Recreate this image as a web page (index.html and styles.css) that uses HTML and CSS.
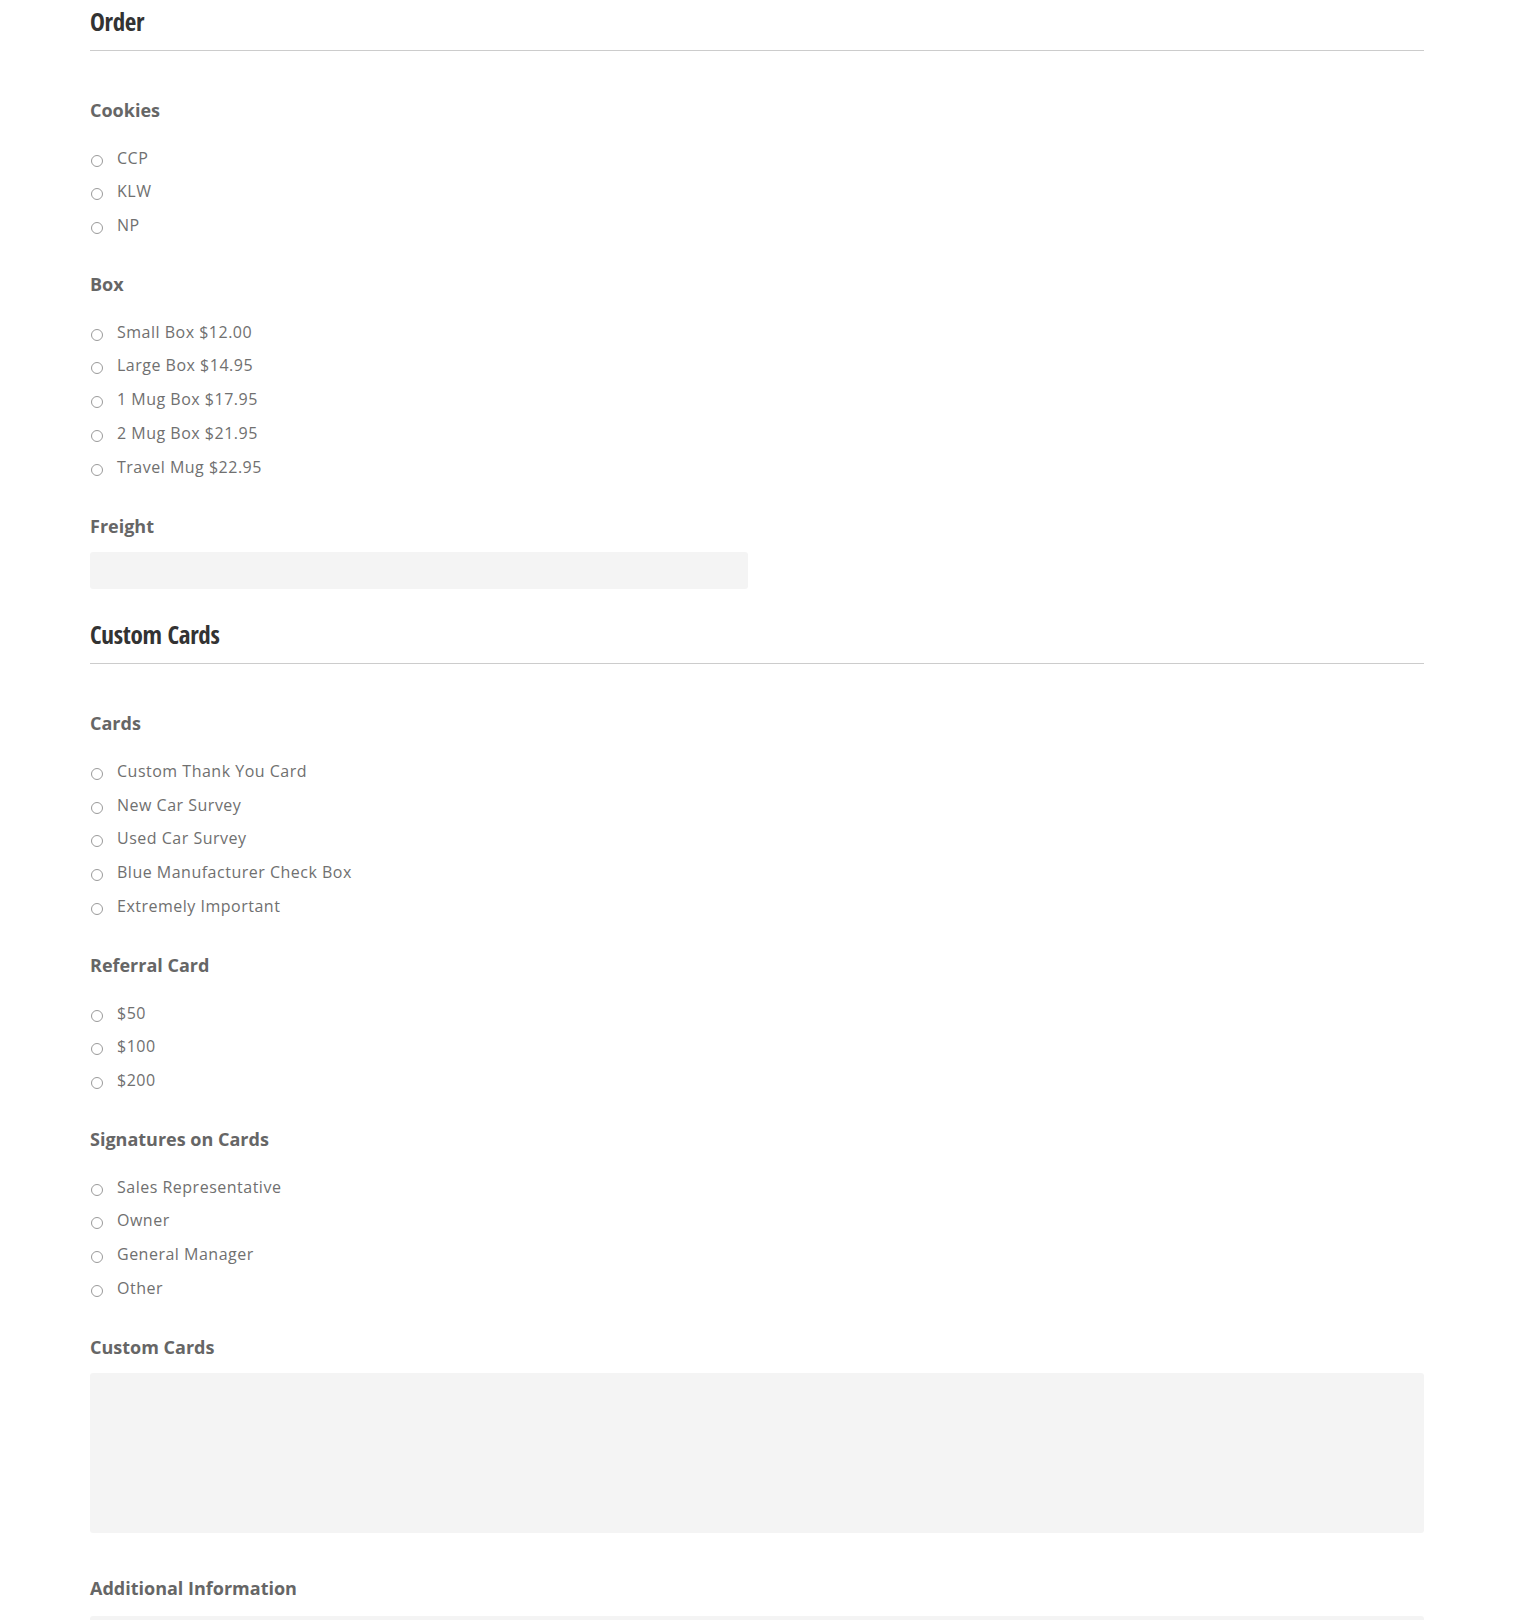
FILE: index.html
```html
<!DOCTYPE html>
<html lang="en">
<head>
<meta charset="utf-8">
<title>Order</title>
<link rel="stylesheet" href="styles.css">
</head>
<body>
<div class="page">
  <h2 class="section-title">Order</h2>
  <div class="group">
    <div class="field-label">Cookies</div>
    <ul class="options">
      <li><label class="opt"><input type="radio" name="cookies"><span>CCP</span></label></li>
      <li><label class="opt"><input type="radio" name="cookies"><span>KLW</span></label></li>
      <li><label class="opt"><input type="radio" name="cookies"><span>NP</span></label></li>
    </ul>
  </div>
  <div class="group">
    <div class="field-label">Box</div>
    <ul class="options">
      <li><label class="opt"><input type="radio" name="box"><span>Small Box $12.00</span></label></li>
      <li><label class="opt"><input type="radio" name="box"><span>Large Box $14.95</span></label></li>
      <li><label class="opt"><input type="radio" name="box"><span>1 Mug Box $17.95</span></label></li>
      <li><label class="opt"><input type="radio" name="box"><span>2 Mug Box $21.95</span></label></li>
      <li><label class="opt"><input type="radio" name="box"><span>Travel Mug $22.95</span></label></li>
    </ul>
  </div>
  <div class="field-block">
    <div class="field-label tight">Freight</div>
    <input class="text-input half" type="text">
  </div>

  <h2 class="section-title second">Custom Cards</h2>
  <div class="group">
    <div class="field-label">Cards</div>
    <ul class="options">
      <li><label class="opt"><input type="radio" name="cards"><span>Custom Thank You Card</span></label></li>
      <li><label class="opt"><input type="radio" name="cards"><span>New Car Survey</span></label></li>
      <li><label class="opt"><input type="radio" name="cards"><span>Used Car Survey</span></label></li>
      <li><label class="opt"><input type="radio" name="cards"><span>Blue Manufacturer Check Box</span></label></li>
      <li><label class="opt"><input type="radio" name="cards"><span>Extremely Important</span></label></li>
    </ul>
  </div>
  <div class="group">
    <div class="field-label">Referral Card</div>
    <ul class="options">
      <li><label class="opt"><input type="radio" name="referral"><span>$50</span></label></li>
      <li><label class="opt"><input type="radio" name="referral"><span>$100</span></label></li>
      <li><label class="opt"><input type="radio" name="referral"><span>$200</span></label></li>
    </ul>
  </div>
  <div class="group">
    <div class="field-label">Signatures on Cards</div>
    <ul class="options">
      <li><label class="opt"><input type="radio" name="sig"><span>Sales Representative</span></label></li>
      <li><label class="opt"><input type="radio" name="sig"><span>Owner</span></label></li>
      <li><label class="opt"><input type="radio" name="sig"><span>General Manager</span></label></li>
      <li><label class="opt"><input type="radio" name="sig"><span>Other</span></label></li>
    </ul>
  </div>
  <div class="field-block">
    <div class="field-label tight">Custom Cards</div>
    <textarea class="text-area"></textarea>
  </div>
  <div class="field-block last">
    <div class="field-label tight2">Additional Information</div>
    <textarea class="text-area"></textarea>
  </div>
</div>
</body>
</html>
```

FILE: styles.css
```css
html, body {
  margin: 0;
  padding: 0;
  background: #ffffff;
}

.page {
  width: 1334px;
  padding: 6px 0 0 90px;
  font-family: "Open Sans", "Noto Sans", sans-serif;
}

.section-title {
  margin: 0;
  padding: 0 0 14px 0;
  border-bottom: 1px solid #cccccc;
  font-family: "Open Sans Condensed", "Open Sans", "Noto Sans", sans-serif;
  font-stretch: 75%;
  font-weight: 700;
  font-size: 25px;
  line-height: 30px;
  color: #333333;
  letter-spacing: -0.3px;
}

.section-title.second {
  margin-top: 30px;
}

.group {
  margin-top: 47px;
}

.group + .group,
.group + .field-block {
  margin-top: 30px;
}

.section-title + .group {
  margin-top: 47px;
}

.field-label {
  font-family: "Open Sans", "Noto Sans", sans-serif;
  font-weight: 700;
  font-size: 18px;
  line-height: 24px;
  color: #666666;
  margin-bottom: 18.7px;
}

.field-label.tight {
  margin-bottom: 14.5px;
}

.field-label.tight2 {
  margin-bottom: 16px;
}

.options {
  list-style: none;
  margin: 0;
  padding: 0;
}

.options li {
  height: 33.8px;
  display: flex;
  align-items: center;
}

.opt {
  display: flex;
  align-items: center;
  font-family: "Open Sans", "Noto Sans", sans-serif;
  font-size: 16px;
  letter-spacing: 0.5px;
  color: #707070;
  line-height: 20px;
}

.opt input {
  -webkit-appearance: none;
  appearance: none;
  width: 12px;
  height: 12px;
  margin: 6px 14px 0 1px;
  border: 1px solid #9a9a9a;
  border-radius: 50%;
  background: #ffffff;
  box-sizing: border-box;
  flex: none;
}

.field-block + .section-title {
  margin-top: 30px;
}

.field-block + .field-block {
  margin-top: 43px;
}

.text-input {
  display: block;
  box-sizing: border-box;
  height: 37px;
  border: none;
  border-radius: 3px;
  background: #f4f4f4;
  margin: 0;
  padding: 0;
}

.text-input.half {
  width: 658px;
}

.text-area {
  display: block;
  box-sizing: border-box;
  width: 1334px;
  height: 160px;
  border: none;
  border-radius: 3px;
  background: #f4f4f4;
  margin: 0;
  padding: 0;
  resize: none;
}
```
